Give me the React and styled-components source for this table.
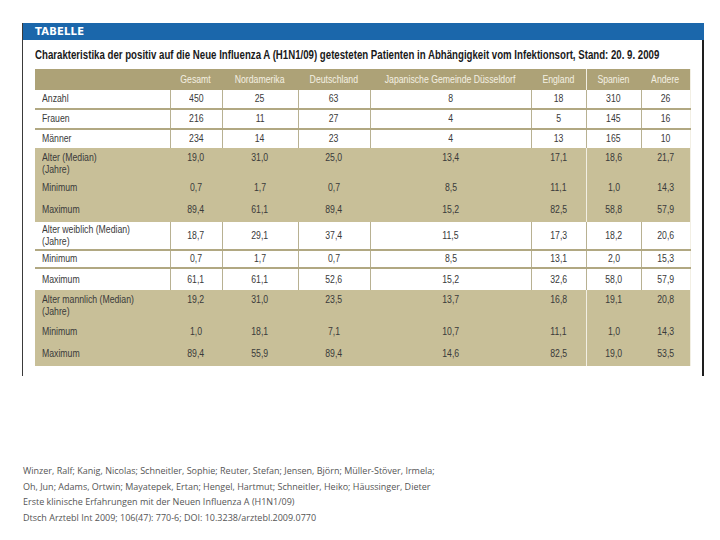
import React from 'react'
import styled, { createGlobalStyle } from 'styled-components'

const GlobalStyle = createGlobalStyle`
    body {
        margin: 0;
        background: #ffffff;
        overflow: hidden;
    }
`

const sans = `"Liberation Sans", Arial, sans-serif`

const columns = [
    { label: 'Gesamt', width: 52 },
    { label: 'Nordamerika', width: 76 },
    { label: 'Deutschland', width: 72 },
    { label: 'Japanische Gemeinde Düsseldorf', width: 161 },
    { label: 'England', width: 55 },
    { label: 'Spanien', width: 55, split: true },
    { label: 'Andere', width: 49, last: true },
]

const rows = [
    { label: ['Anzahl'], values: ['450', '25', '63', '8', '18', '310', '26'], h: 19 },
    { label: ['Frauen'], values: ['216', '11', '27', '4', '5', '145', '16'], h: 20 },
    { label: ['Männer'], values: ['234', '14', '23', '4', '13', '165', '10'], h: 19 },
    { label: ['Alter (Median)', '(Jahre)'], values: ['19,0', '31,0', '25,0', '13,4', '17,1', '18,6', '21,7'], h: 30, tan: true },
    { label: ['Minimum'], values: ['0,7', '1,7', '0,7', '8,5', '11,1', '1,0', '14,3'], h: 22, tan: true },
    { label: ['Maximum'], values: ['89,4', '61,1', '89,4', '15,2', '82,5', '58,8', '57,9'], h: 22, tan: true },
    { label: ['Alter weiblich (Median)', '(Jahre)'], values: ['18,7', '29,1', '37,4', '11,5', '17,3', '18,2', '20,6'], h: 28 },
    { label: ['Minimum'], values: ['0,7', '1,7', '0,7', '8,5', '13,1', '2,0', '15,3'], h: 18 },
    { label: ['Maximum'], values: ['61,1', '61,1', '52,6', '15,2', '32,6', '58,0', '57,9'], h: 22 },
    { label: ['Alter mannlich (Median)', '(Jahre)'], values: ['19,2', '31,0', '23,5', '13,7', '16,8', '19,1', '20,8'], h: 32, tan: true },
    { label: ['Minimum'], values: ['1,0', '18,1', '7,1', '10,7', '11,1', '1,0', '14,3'], h: 22, tan: true },
    { label: ['Maximum'], values: ['89,4', '55,9', '89,4', '14,6', '82,5', '19,0', '53,5'], h: 22, tan: true },
]

const citation = [
    'Winzer, Ralf; Kanig, Nicolas; Schneitler, Sophie; Reuter, Stefan; Jensen, Björn; Müller-Stöver, Irmela;',
    'Oh, Jun; Adams, Ortwin; Mayatepek, Ertan; Hengel, Hartmut; Schneitler, Heiko; Häussinger, Dieter',
    'Erste klinische Erfahrungen mit der Neuen Influenza A (H1N1/09)',
    'Dtsch Arztebl Int 2009; 106(47): 770-6; DOI: 10.3238/arztebl.2009.0770',
]

const App = () => {
    return (
        <>
            <GlobalStyle />
            <Page>
                <Frame>
                    <Banner>TABELLE</Banner>
                    <Body>
                        <Title>
                            <Squeeze origin="left" ratio={0.805}>
                                Charakteristika der positiv auf die Neue Influenza A (H1N1/09) getesteten Patienten in Abhängigkeit vom Infektionsort, Stand: 20. 9. 2009
                            </Squeeze>
                        </Title>
                        <Table>
                            <colgroup>
                                <col style={{ width: 135 }} />
                                {columns.map((c) => (
                                    <col key={c.label} style={{ width: c.width }} />
                                ))}
                            </colgroup>
                            <thead>
                                <tr>
                                    <HeadCell />
                                    {columns.map((c) => (
                                        <HeadCell key={c.label} split={c.split} last={c.last}>
                                            <Squeeze>{c.label}</Squeeze>
                                        </HeadCell>
                                    ))}
                                </tr>
                            </thead>
                            <tbody>
                                {rows.map((row, i) => {
                                    const nextTan = rows[i + 1] ? rows[i + 1].tan : true
                                    return (
                                        <Row key={i} tan={row.tan} lined={!row.tan && !nextTan} style={{ height: row.h }}>
                                            <LabelCell tan={row.tan}>
                                                {row.label.map((l) => (
                                                    <div key={l}>
                                                        <Squeeze origin="left">{l}</Squeeze>
                                                    </div>
                                                ))}
                                            </LabelCell>
                                            {row.values.map((v, j) => (
                                                <Cell
                                                    key={j}
                                                    tan={row.tan}
                                                    split={columns[j].split}
                                                    last={columns[j].last}
                                                >
                                                    <Squeeze>{v}</Squeeze>
                                                </Cell>
                                            ))}
                                        </Row>
                                    )
                                })}
                            </tbody>
                        </Table>
                    </Body>
                </Frame>
                <Citation>
                    {citation.map((line) => (
                        <CitationLine key={line}>{line}</CitationLine>
                    ))}
                </Citation>
            </Page>
        </>
    )
}

const Page = styled.div`
    width: 720px;
    height: 540px;
    padding: 23px 0 0 22px;
    box-sizing: border-box;
    overflow: hidden;
`

const Frame = styled.div`
    width: 682px;
    height: 353px;
    border-left: 1px solid #3a3a3a;
    border-right: 2px solid #1e1e1e;
    box-sizing: border-box;
    display: flex;
    flex-direction: column;
`

const Banner = styled.div`
    height: 17px;
    margin-right: -2px;
    background: #1b67ab;
    color: #ffffff;
    font-family: "DejaVu Sans", sans-serif;
    font-weight: bold;
    font-size: 10px;
    letter-spacing: 0.2px;
    line-height: 18px;
    padding-left: 12px;
`

const Body = styled.div`
    padding: 0 0 0 12px;
`

const Squeeze = styled.span`
    display: inline-block;
    white-space: nowrap;
    transform: scaleX(${({ ratio }) => ratio || 0.87});
    transform-origin: ${({ origin }) => origin || 'center'};
`

const Title = styled.div`
    font-family: ${sans};
    font-weight: bold;
    font-size: 12px;
    color: #1a1a1a;
    height: 29px;
    line-height: 31px;
    white-space: nowrap;
    overflow: hidden;
`

const Table = styled.table`
    border-collapse: collapse;
    table-layout: fixed;
    width: 655px;
    font-family: ${sans};
    font-size: 10px;
    color: #3a3a3a;
`

const HeadCell = styled.th`
    height: 21px;
    padding: 0;
    background: #ada277;
    color: #f4f0e2;
    font-weight: normal;
    text-align: center;
    white-space: nowrap;
    border-left: ${({ split }) => (split ? '1px solid #f2efe4' : 'none')};
    border-right: ${({ last }) => (last ? '1px solid #f2efe4' : 'none')};
`

const Row = styled.tr`
    background: ${({ tan }) => (tan ? '#c8bf98' : '#ffffff')};
    border-bottom: ${({ lined }) => (lined ? '2px solid #b1a882' : 'none')};
`

const LabelCell = styled.td`
    padding: ${({ tan }) => (tan ? '4px 0 0 7px' : '0 0 0 7px')};
    vertical-align: ${({ tan }) => (tan ? 'top' : 'middle')};
    line-height: 12px;
    white-space: nowrap;
    border-right: ${({ tan }) => (tan ? 'none' : '1px solid #b8b192')};
`

const Cell = styled.td`
    padding: ${({ tan }) => (tan ? '4px 0 0 0' : '0')};
    vertical-align: ${({ tan }) => (tan ? 'top' : 'middle')};
    text-align: center;
    line-height: 12px;
    border-right: ${({ tan, last }) =>
        last ? '1px solid #f2efe4' : tan ? 'none' : '1px solid #b8b192'};
    border-left: ${({ tan, split }) => (tan && split ? '1px solid #f2efe4' : undefined)};
`

const Citation = styled.div`
    margin-top: 87px;
    margin-left: 1px;
    font-family: "Open Sans", sans-serif;
    font-size: 9px;
    color: #555555;
`

const CitationLine = styled.div`
    line-height: 15.7px;
    white-space: nowrap;
`

export default App
